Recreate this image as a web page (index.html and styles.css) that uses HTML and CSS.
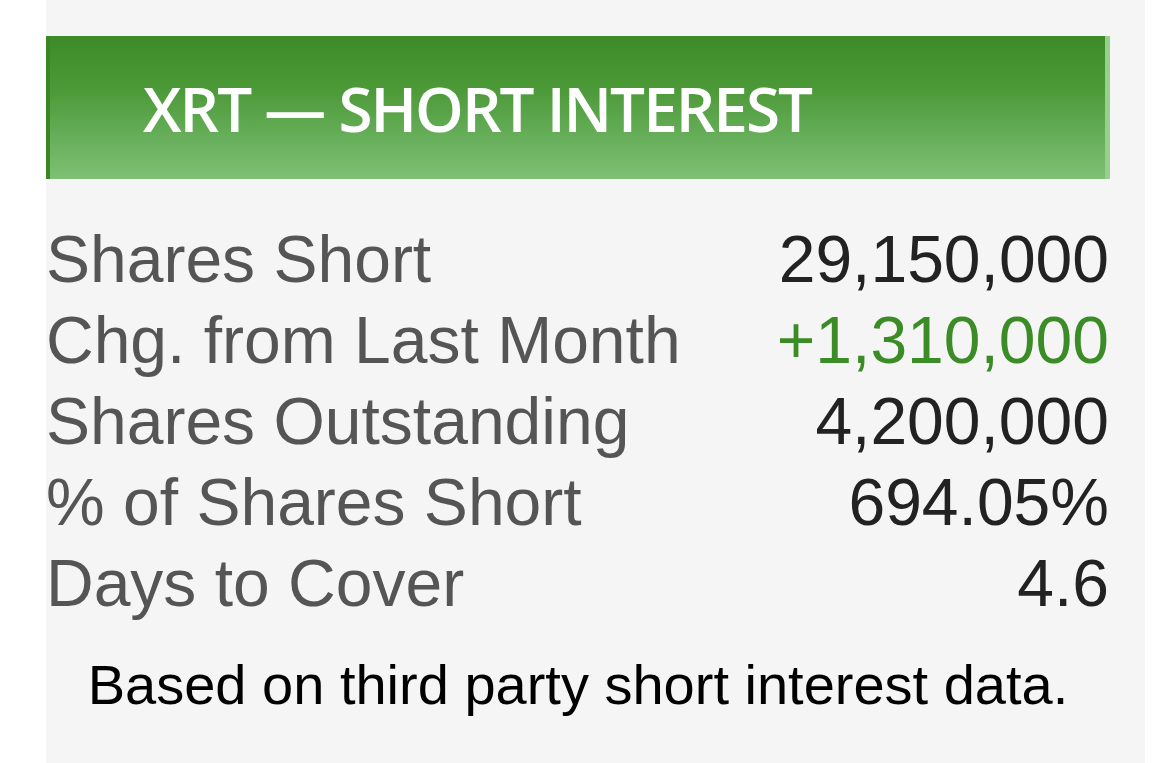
FILE: index.html
```html
<!DOCTYPE html>
<html>
<head>
<meta charset="utf-8">
<link rel="stylesheet" href="styles.css">
</head>
<body>
<div class="panel">
  <div class="header"><h1 class="title">XRT — SHORT INTEREST</h1></div>
  <div class="rows">
    <div class="row"><span class="label">Shares Short</span><span class="value">29,150,000</span></div>
    <div class="row"><span class="label">Chg. from Last Month</span><span class="value up">+1,310,000</span></div>
    <div class="row"><span class="label">Shares Outstanding</span><span class="value">4,200,000</span></div>
    <div class="row"><span class="label">% of Shares Short</span><span class="value">694.05%</span></div>
    <div class="row"><span class="label">Days to Cover</span><span class="value">4.6</span></div>
  </div>
  <p class="note">Based on third party short interest data.</p>
</div>
</body>
</html>
```
FILE: styles.css
```css
html, body { margin: 0; padding: 0; background: #ffffff; }
.panel {
  margin-left: 46px;
  width: 1099px;
  min-height: 763px;
  box-sizing: border-box;
  background: #f5f5f5;
  padding: 36px 35px 0 0;
}
.header {
  height: 143px;
  box-sizing: border-box;
  background: linear-gradient(to bottom, #3c8a28 0%, #4a9836 35%, #66ae59 70%, #7fc074 100%);
  border-left: 4px solid #3a8526;
  border-right: 5px solid #97cf8d;
  display: flex;
  align-items: center;
  padding-left: 93px;
}
.title {
  margin: 0;
  color: #ffffff;
  font-family: "Open Sans", "DejaVu Sans", sans-serif;
  font-weight: 600;
  font-size: 62px;
  letter-spacing: -2px;
  line-height: 1;
  padding-top: 0;
}
.rows {
  margin-top: 40px;
  font-family: "Liberation Sans", Arial, sans-serif;
  font-size: 66px;
  line-height: 81px;
}
.row { display: flex; justify-content: space-between; }
.label { color: #555555; }
.value { color: #222222; padding-right: 1px; }
.value.up { color: #3b8c26; }
.note {
  margin: 29px 0 0 0;
  text-align: center;
  font-family: "Liberation Sans", Arial, sans-serif;
  font-size: 56px;
  line-height: 64px;
  color: #000000;
}
```
